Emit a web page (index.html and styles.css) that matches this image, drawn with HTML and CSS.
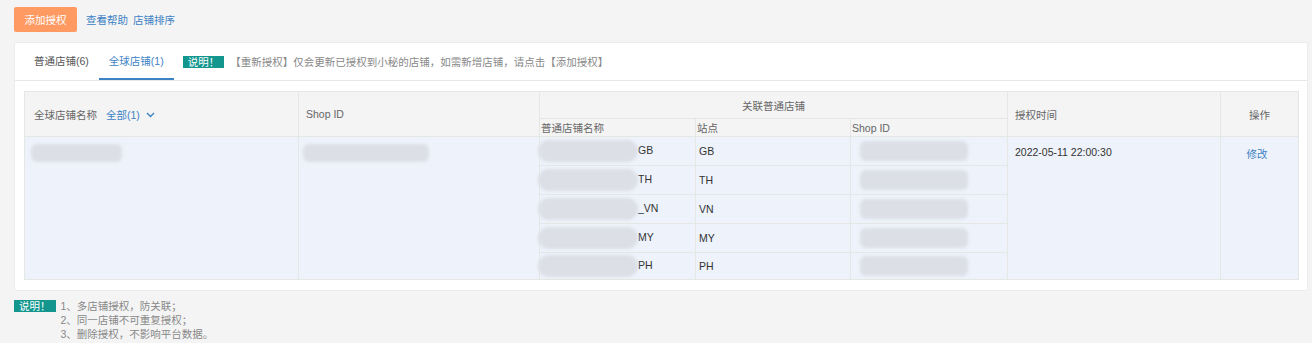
FILE: index.html
```html
<!DOCTYPE html>
<html lang="zh-CN">
<head>
    <meta charset="UTF-8">
    <title>全球店铺授权</title>
    <link rel="stylesheet" href="styles.css">
</head>
<body>
    <div class="toolbar">
        <button class="btn-add">添加授权</button>
        <a class="link" href="#">查看帮助</a>
        <a class="link" href="#">店铺排序</a>
    </div>

    <div class="panel">
        <div class="tabs">
            <span class="tab">普通店铺(6)</span>
            <span class="tab active">全球店铺(1)</span>
            <span class="badge">说明！</span>
            <span class="tip">【重新授权】仅会更新已授权到小秘的店铺，如需新增店铺，请点击【添加授权】</span>
        </div>

        <div class="table-wrap">
            <table class="shops">
                <colgroup>
                    <col style="width:274px">
                    <col style="width:241px">
                    <col style="width:156px">
                    <col style="width:155px">
                    <col style="width:157px">
                    <col style="width:213px">
                    <col style="width:78px">
                </colgroup>
                <thead>
                    <tr class="head-top">
                        <th rowspan="2" class="first">全球店铺名称 <span class="filter">全部(1) <svg width="9" height="6" viewBox="0 0 9 6"><path d="M1 1l3.5 3.5L8 1" fill="none" stroke="#3d82c4" stroke-width="1.4"/></svg></span></th>
                        <th rowspan="2">Shop ID</th>
                        <th colspan="3" class="center">关联普通店铺</th>
                        <th rowspan="2">授权时间</th>
                        <th rowspan="2" class="center">操作</th>
                    </tr>
                    <tr class="head-sub">
                        <th>普通店铺名称</th>
                        <th>站点</th>
                        <th>Shop ID</th>
                    </tr>
                </thead>
                <tbody>
                    <tr>
                        <td rowspan="5" class="top"><span class="blur b-name"></span></td>
                        <td rowspan="5" class="top"><span class="blur b-id"></span></td>
                        <td class="store"><span class="blur b-store"></span>GB</td>
                        <td>GB</td>
                        <td class="sid"><span class="blur b-sid"></span></td>
                        <td rowspan="5" class="top time">2022-05-11 22:00:30</td>
                        <td rowspan="5" class="top center"><a class="link" href="#">修改</a></td>
                    </tr>
                    <tr>
                        <td class="store"><span class="blur b-store"></span>TH</td>
                        <td>TH</td>
                        <td class="sid"><span class="blur b-sid"></span></td>
                    </tr>
                    <tr>
                        <td class="store"><span class="blur b-store"></span>_VN</td>
                        <td>VN</td>
                        <td class="sid"><span class="blur b-sid"></span></td>
                    </tr>
                    <tr>
                        <td class="store"><span class="blur b-store"></span>MY</td>
                        <td>MY</td>
                        <td class="sid"><span class="blur b-sid"></span></td>
                    </tr>
                    <tr class="last">
                        <td class="store"><span class="blur b-store"></span>PH</td>
                        <td>PH</td>
                        <td class="sid"><span class="blur b-sid"></span></td>
                    </tr>
                </tbody>
            </table>
        </div>
    </div>

    <div class="notes">
        <span class="badge">说明！</span>
        <div class="note-lines">
            <div>1、多店铺授权，防关联；</div>
            <div>2、同一店铺不可重复授权；</div>
            <div>3、删除授权，不影响平台数据。</div>
        </div>
    </div>
</body>
</html>
```

FILE: styles.css
```css
body {
    font-family: "Liberation Sans", "Noto Sans CJK SC", sans-serif;
    font-size: 10.5px;
    color: #333;
    background-color: #f4f4f4;
    margin: 0;
    padding: 7px 4px 0 14px;
}

.toolbar {
    display: flex;
    align-items: center;
    height: 25px;
}

.btn-add {
    font-family: inherit;
    font-size: 10.5px;
    background-color: #ff9a62;
    color: #fff;
    border: none;
    border-radius: 2px;
    width: 63px;
    height: 25px;
    padding: 0;
    margin-right: 9px;
}

.link {
    color: #3d82c4;
    text-decoration: none;
    margin-right: 5px;
}

.panel {
    margin-top: 10px;
    background-color: #fff;
    border: 1px solid #ececec;
    border-radius: 2px;
}

.tabs {
    display: flex;
    align-items: center;
    height: 37px;
    padding-left: 9px;
    border-bottom: 1px solid #e8e8e8;
}

.tab {
    color: #555;
    padding: 0 10px;
    height: 37px;
    line-height: 37px;
    box-sizing: border-box;
}

.tab.active {
    color: #3d82c4;
    border-bottom: 2px solid #3d82c4;
}

.badge {
    display: inline-block;
    background-color: #13968e;
    color: #fff;
    height: 12px;
    line-height: 12px;
    padding: 0 5px;
    font-size: 10.5px;
}

.tabs .badge {
    margin-left: 9px;
    margin-right: 6px;
}

.tip {
    color: #888;
}

.table-wrap {
    padding: 10px 9px 10px 9px;
}

.shops {
    border-collapse: collapse;
    table-layout: fixed;
    width: 1274px;
}

.shops th,
.shops td {
    border: 1px solid #e6e6e6;
    text-align: left;
    white-space: nowrap;
    overflow: visible;
}

.shops th {
    background-color: #f4f4f4;
    color: #666;
    font-weight: normal;
    padding: 0 7px;
}

.shops th.first {
    padding-left: 9px;
}

.shops .center {
    text-align: center;
}

.head-top th {
    height: 26px;
}

.head-sub th {
    height: 17px;
    padding: 0 1px;
}

.shops td {
    background-color: #eef2fa;
    height: 28px;
    padding: 0 3px;
    color: #333;
}

.shops tr.last td {
    height: 26px;
}

.shops td.top {
    vertical-align: top;
    padding: 7px 6px;
}

.shops td.time {
    padding: 9px 7px;
}

.shops td.top.center {
    padding-top: 9px;
}

.filter {
    color: #3d82c4;
    margin-left: 6px;
}

.filter svg {
    margin-left: 3px;
    vertical-align: 1px;
}

.blur {
    display: inline-block;
    background-color: #dcdfe6;
    filter: blur(1.5px);
    border-radius: 6px;
    vertical-align: middle;
}

.b-name {
    width: 91px;
    height: 18px;
}

.b-id {
    width: 126px;
    height: 18px;
    margin-left: -2px;
}

.shops td.store {
    padding-left: 0;
}

.b-store {
    width: 100px;
    height: 22px;
    margin-left: -2px;
    border-radius: 11px;
}

.shops td.sid {
    padding-left: 9px;
}

.b-sid {
    width: 108px;
    height: 20px;
}

.notes {
    display: flex;
    align-items: flex-start;
    margin-top: 8px;
    color: #888;
}

.notes .badge {
    margin-top: 1px;
    margin-right: 5px;
}

.note-lines {
    line-height: 14px;
}
```
